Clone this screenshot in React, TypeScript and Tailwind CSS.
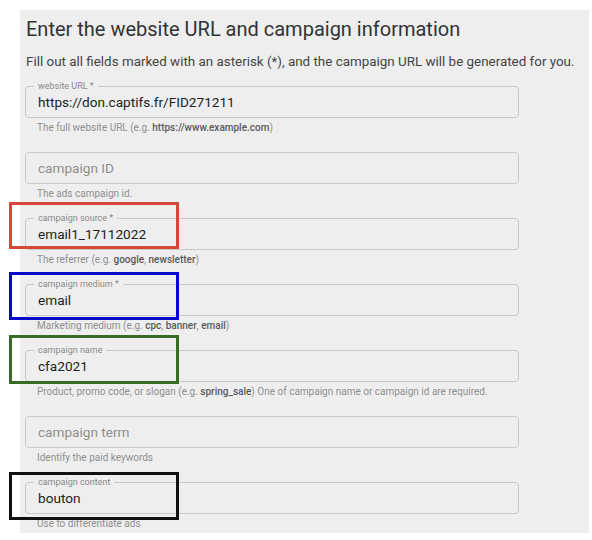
import React from "react";

type Field = {
  label: string;
  value?: string;
  required?: boolean;
  helper: React.ReactNode;
};

const B = ({ children }: { children: React.ReactNode }) => (
  <span className="font-medium text-[#5a5a5a]">{children}</span>
);

const fields: Field[] = [
  {
    label: "website URL",
    required: true,
    value: "https://don.captifs.fr/FID271211",
    helper: (
      <>
        The full website URL (e.g. <B>https://www.example.com</B>)
      </>
    ),
  },
  { label: "campaign ID", helper: "The ads campaign id." },
  {
    label: "campaign source",
    required: true,
    value: "email1_17112022",
    helper: (
      <>
        The referrer (e.g. <B>google</B>, <B>newsletter</B>)
      </>
    ),
  },
  {
    label: "campaign medium",
    required: true,
    value: "email",
    helper: (
      <>
        Marketing medium (e.g. <B>cpc</B>, <B>banner</B>, <B>email</B>)
      </>
    ),
  },
  {
    label: "campaign name",
    value: "cfa2021",
    helper: (
      <>
        Product, promo code, or slogan (e.g. <B>spring_sale</B>) One of campaign name or campaign id are required.
      </>
    ),
  },
  { label: "campaign term", helper: "Identify the paid keywords" },
  { label: "campaign content", value: "bouton", helper: "Use to differentiate ads" },
];

function OutlinedField({ field, first }: { field: Field; first: boolean }) {
  const filled = !!field.value;
  return (
    <div className={first ? "pt-[10px]" : "pt-[13px]"}>
      {filled ? (
        <fieldset className="border border-[#c9c9c9] rounded-[4px] pl-[8px] pr-2 w-[494px]">
          <legend className="px-1 text-[9px] leading-[10px] text-[#8a8a8a]">
            {field.label}
            {field.required ? " *" : ""}
          </legend>
          <div className="h-[26px] pt-[1px] pl-1 text-[13.6px] leading-[20px] text-[#222]">{field.value}</div>
        </fieldset>
      ) : (
        <fieldset className="mt-[5px] border border-[#c9c9c9] rounded-[4px] pl-[8px] pr-2 w-[494px]">
          <div className="h-[30px] pt-[5px] pl-1 text-[13.6px] leading-[20px] text-[#8f8f8f]">{field.label}</div>
        </fieldset>
      )}
      <div className="mt-[4px] pl-[12px] text-[10px] leading-[12px] text-[#8f8f8f] whitespace-nowrap">
        {field.helper}
      </div>
    </div>
  );
}

export default function App() {
  return (
    <div
      className="relative w-[592px] h-[540px] bg-white overflow-hidden"
      style={{ fontFamily: "Roboto, 'Liberation Sans', sans-serif" }}
    >
      <div className="ml-[20px] mt-[10px] w-[569px] h-[523px] bg-[#eeeeee] pl-[5px] pt-[5px]">
        <h1 className="pl-[1px] text-[20px] leading-[28px] text-[#333]">
          Enter the website URL and campaign information
        </h1>
        <p className="mt-[10px] pl-[1px] text-[13.4px] leading-[18px] text-[#444] whitespace-nowrap">
          Fill out all fields marked with an asterisk (*), and the campaign URL will be generated for you.
        </p>
        {fields.map((f, i) => (
          <OutlinedField key={f.label} field={f} first={i === 0} />
        ))}
      </div>

      {/* annotation boxes */}
      <div className="absolute left-[9px] top-[202px] w-[170px] h-[47px] border-[3px] border-[#d8463a]" />
      <div className="absolute left-[9px] top-[272px] w-[170px] h-[48px] border-[3px] border-[#0808cc]" />
      <div className="absolute left-[9px] top-[335px] w-[170px] h-[49px] border-[3px] border-[#3a6b26]" />
      <div className="absolute left-[9px] top-[472px] w-[170px] h-[48px] border-[3px] border-[#111]" />
    </div>
  );
}
